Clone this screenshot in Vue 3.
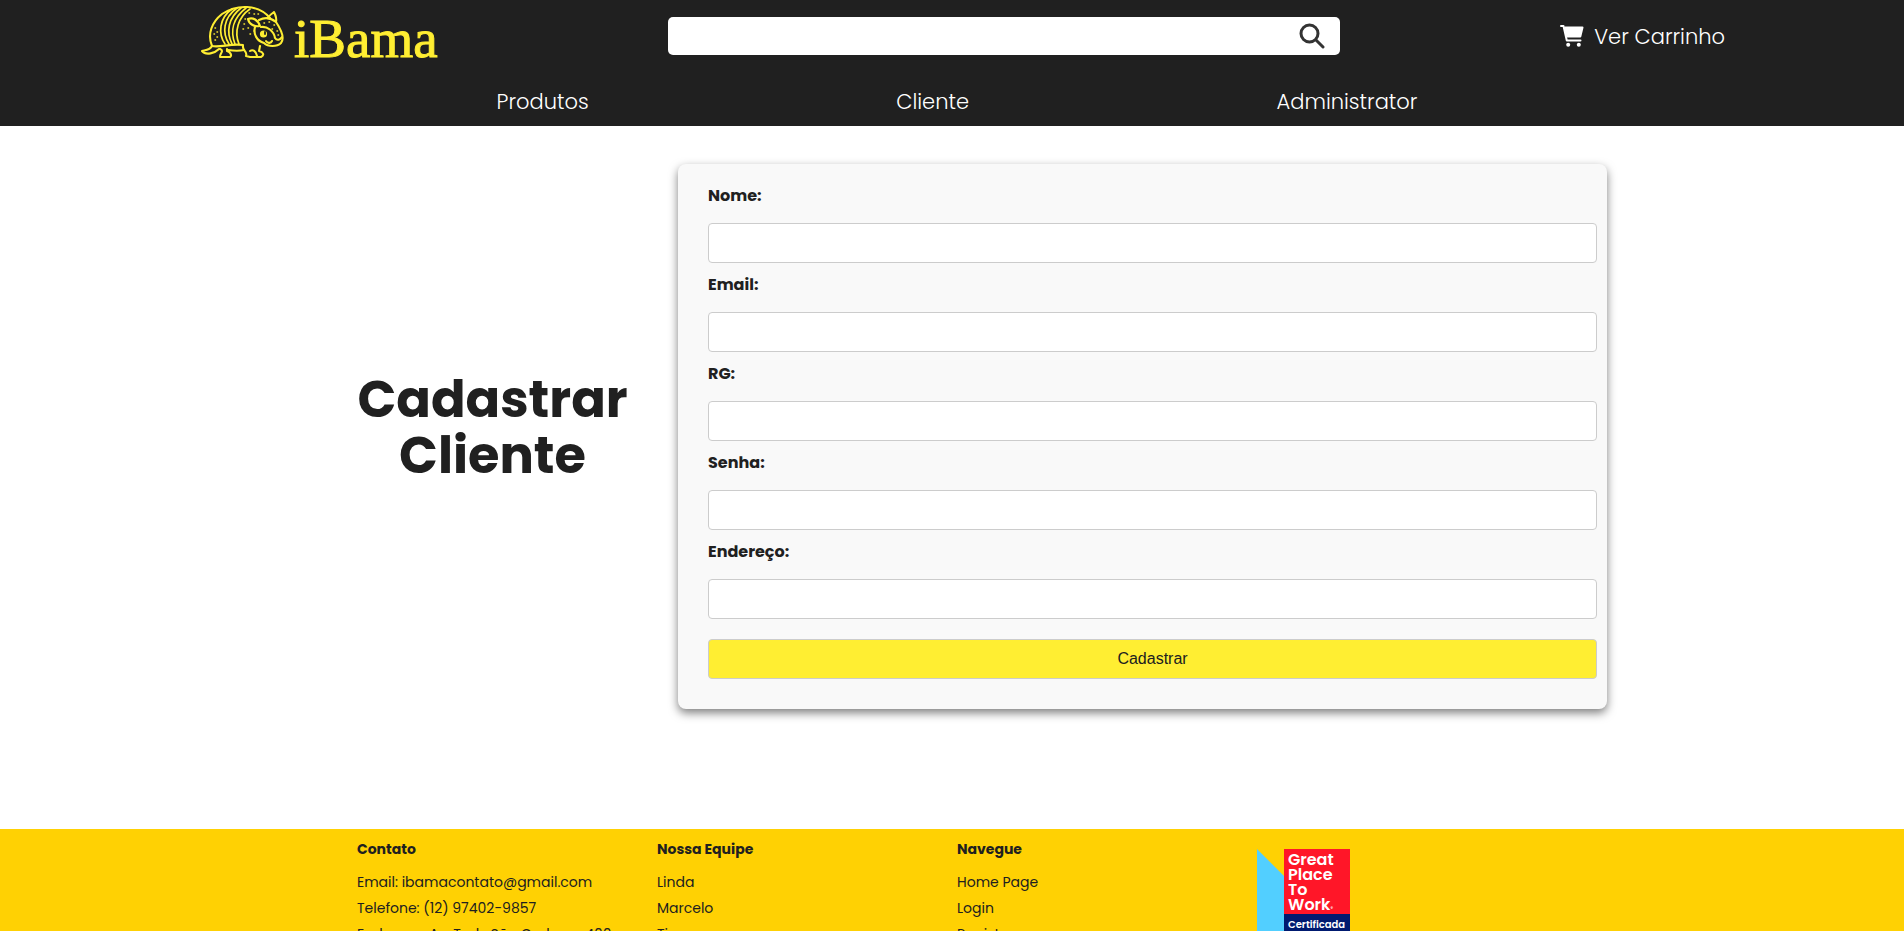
<script setup>
import { ref } from 'vue'

const search = ref('')
const nav = ['Produtos', 'Cliente', 'Administrator']
const fields = ref([
  { id: 'nome', label: 'Nome:', type: 'text', value: '' },
  { id: 'email', label: 'Email:', type: 'email', value: '' },
  { id: 'rg', label: 'RG:', type: 'text', value: '' },
  { id: 'senha', label: 'Senha:', type: 'password', value: '' },
  { id: 'endereco', label: 'Endereço:', type: 'text', value: '' },
])
const contact = [
  'Email: ibamacontato@gmail.com',
  'Telefone: (12) 97402-9857',
  'Endereço: Av. Tuds São Carlos, n 400',
]
const team = ['Linda', 'Marcelo', 'Tiago']
const links = ['Home Page', 'Login', 'Registro']
</script>

<template>
  <div class="page">
    <header class="header">
      <div class="top">
        <a href="#" class="logo" aria-label="iBama">
          <svg class="mascot" viewBox="0 0 95 60" width="95" height="60" fill="none" stroke="#ffee32" stroke-width="2.1" stroke-linecap="round" stroke-linejoin="round">
            <path d="M17 46C12 34 17 22 27 14C42 4 63 4 75 18" />
            <path d="M17 46C15 50 11 50 7 51C11 56 20 53 24 49" />
            <path d="M17 46C25 48 36 43 48 45" />
            <path d="M25 49C30 51 24 54 25 57H35C37 56 36 52 32 51L32 49M33 50C39 51 45 51 49 50" />
            <path d="M48 46C47 51 53 51 51 56L55 57H66C70 55 68 52 64 51L65 46M55 51C58 49 61 51 62 56" />
            <path d="M37 9C24 18 23 34 30 44M42 8C28 18 27 33 34 44M46 8C33 18 31 32 37 44M51 8C38 18 35 31 40 44M55 9C43 17 39 32 44 44" stroke-width="1.7" />
            <path d="M53 19C58 17 63 20 65 26C59 27 54 24 53 19ZM60 27C58 34 62 41 69 43C73 47 82 47 86 43C90 38 85 28 81 22" />
            <path d="M64 20C70 17 76 18 81 22C82 18 80 14 79 12C76 14 74 16 73 18M66 27C72 26 79 31 80 38C82 41 85 40 87 37M71 41C73 44 76 43 77 41" />
            <circle cx="68.500" cy="34" r="3.600" fill="#ffee32" stroke="none" />
            <path d="M70 32V34" stroke="#202020" stroke-width="1.8" />
            <path d="M20 28h.5M22 32h.5M19 34h.5M22 37h.5M20 40h.5M54 13h.5M59 14h.5M50 19h.5M49 24h.5M48 29h.5M53 28h.5M59 31h.5M63 14h.5M69 23h.5M74 22h.5M79 25h.5M77 29h.5M82 31h.5M83 35h.5M55 34h.5" stroke-width="1.500" />
          </svg>
          <span class="wordmark">iBama</span>
        </a>
        <form class="search" role="search" @submit.prevent>
          <input v-model="search" type="search" aria-label="Buscar" />
          <button type="submit" aria-label="Pesquisar">
            <svg viewBox="0 0 26 26" width="26" height="26" fill="none" stroke="#333" stroke-width="3" stroke-linecap="round">
              <circle cx="10.500" cy="10.500" r="8.500" />
              <path d="M17 17L24 24" />
            </svg>
          </button>
        </form>
        <a href="#" class="cart">
          <svg viewBox="0 0 24 22" width="24" height="22" fill="none" stroke="#fff" stroke-width="2" stroke-linecap="round" stroke-linejoin="round">
            <path d="M1 1H3.500L6.800 15.500H20.500" />
            <path d="M5.200 2.500H22.500L20.300 11.500H7.200Z" fill="#fff" />
            <circle cx="8.200" cy="19.800" r="2" fill="#fff" stroke="none" />
            <circle cx="18.800" cy="19.800" r="2" fill="#fff" stroke="none" />
          </svg>
          <span>Ver Carrinho</span>
        </a>
      </div>
      <nav class="nav">
        <a v-for="n in nav" :key="n" href="#">{{ n }}</a>
      </nav>
    </header>

    <main class="main">
      <h1>Cadastrar Cliente</h1>
      <form class="card" @submit.prevent>
        <template v-for="f in fields" :key="f.id">
          <label :for="f.id">{{ f.label }}</label>
          <input :id="f.id" v-model="f.value" :type="f.type" />
        </template>
        <button type="submit">Cadastrar</button>
      </form>
    </main>

    <footer class="footer">
      <section>
        <h2>Contato</h2>
        <ul><li v-for="c in contact" :key="c">{{ c }}</li></ul>
      </section>
      <section>
        <h2>Nossa Equipe</h2>
        <ul><li v-for="t in team" :key="t">{{ t }}</li></ul>
      </section>
      <section>
        <h2>Navegue</h2>
        <ul><li v-for="l in links" :key="l"><a href="#">{{ l }}</a></li></ul>
      </section>
      <section class="seal">
        <div class="ribbon"></div>
        <div class="plate">
          <p class="brand">Great<br />Place<br />To<br />Work<small>®</small></p>
          <p class="cert">Certificada</p>
        </div>
      </section>
    </footer>
  </div>
</template>

<style>
html, body { margin: 0; height: 100%; overflow: hidden; }
#app { height: 100%; }
</style>

<style scoped>
* { box-sizing: border-box; }
.page {
  display: flex;
  flex-direction: column;
  height: 100%;
  overflow: hidden;
  color: #202020;
  background: #fff;
  font-family: Poppins, Inter, "Open Sans", sans-serif;
}
a { color: inherit; text-decoration: none; }
.header { flex: none; background: #202020; color: #fff; padding: 0 179px 0 195px; }
.top { display: flex; align-items: center; justify-content: space-between; height: 72px; }
.logo { display: flex; align-items: flex-start; width: 253px; height: 72px; color: #ffee32; }
.mascot { flex: none; }
.wordmark {
  margin-left: 4px;
  padding-top: 9px;
  font: 55px/60px "Liberation Serif", serif;
  -webkit-text-stroke: 1px #ffee32;
}
.search { display: flex; width: 672px; height: 38px; background: #fff; border-radius: 5px; }
.search input { flex: 1; min-width: 0; border: 0; background: none; padding: 0 12px; font-size: 16px; outline: 0; }
.search button { display: flex; align-items: center; border: 0; background: none; padding: 0 15px; }
.cart { display: flex; align-items: center; gap: 10px; font-size: 21px; font-weight: 300; line-height: 30px; }
.cart span { padding-top: 2px; }
.nav { display: flex; justify-content: space-evenly; height: 54px; padding-top: 15px; margin-left: -6px; font-size: 21px; font-weight: 300; line-height: 30px; }
.main { flex: none; display: flex; align-items: center; padding: 38px 297px 120px 357px; }
h1 { width: 271px; margin: 0 50px 20px 0; text-align: center; font-size: 51px; font-weight: 700; line-height: 56px; }
.card {
  flex: 1;
  display: flex;
  flex-direction: column;
  padding: 20px 10px 30px 30px;
  background: #f9f9f9;
  border-radius: 8px;
  box-shadow: 0 4px 10px rgba(0, 0, 0, 0.5);
}
.card label { font-size: 16px; font-weight: 700; line-height: 24px; margin-bottom: 15px; }
.card input, .card button {
  height: 40px;
  margin-bottom: 10px;
  padding: 0 10px;
  border: 1px solid #ccc;
  border-radius: 4px;
  background: #fff;
  font: 16px "Liberation Sans", Arial, sans-serif;
  color: #202020;
}
.card button { margin: 10px 0 0; background: #ffee32; }
.footer {
  flex: 1 0 auto;
  display: grid;
  grid-template-columns: repeat(4, 300px);
  padding: 8px 0 0 357px;
  background: #ffd103;
  font-size: 14px;
}
.footer h2 { margin: 0 0 8px; font-size: 14px; line-height: 24px; font-weight: 700; }
.footer ul { list-style: none; margin: 0; padding: 0; }
.footer li { line-height: 26px; }
.seal { display: flex; align-items: flex-start; padding-top: 12px; }
.ribbon { width: 27px; height: 120px; background: #52cfff; clip-path: polygon(0 0, 100% 27px, 100% 100%, 0 100%); }
.plate { width: 66px; height: 120px; background: #001a70; color: #fff; }
.plate p { margin: 0; }
.plate .brand { height: 65px; padding: 3px 4px; background: #ff1628; font-size: 16px; line-height: 15px; font-weight: 600; }
.brand small { font-size: 5px; line-height: 5px; }
.plate .cert { padding-left: 4px; font-size: 10px; line-height: 22px; font-weight: 600; }
</style>
